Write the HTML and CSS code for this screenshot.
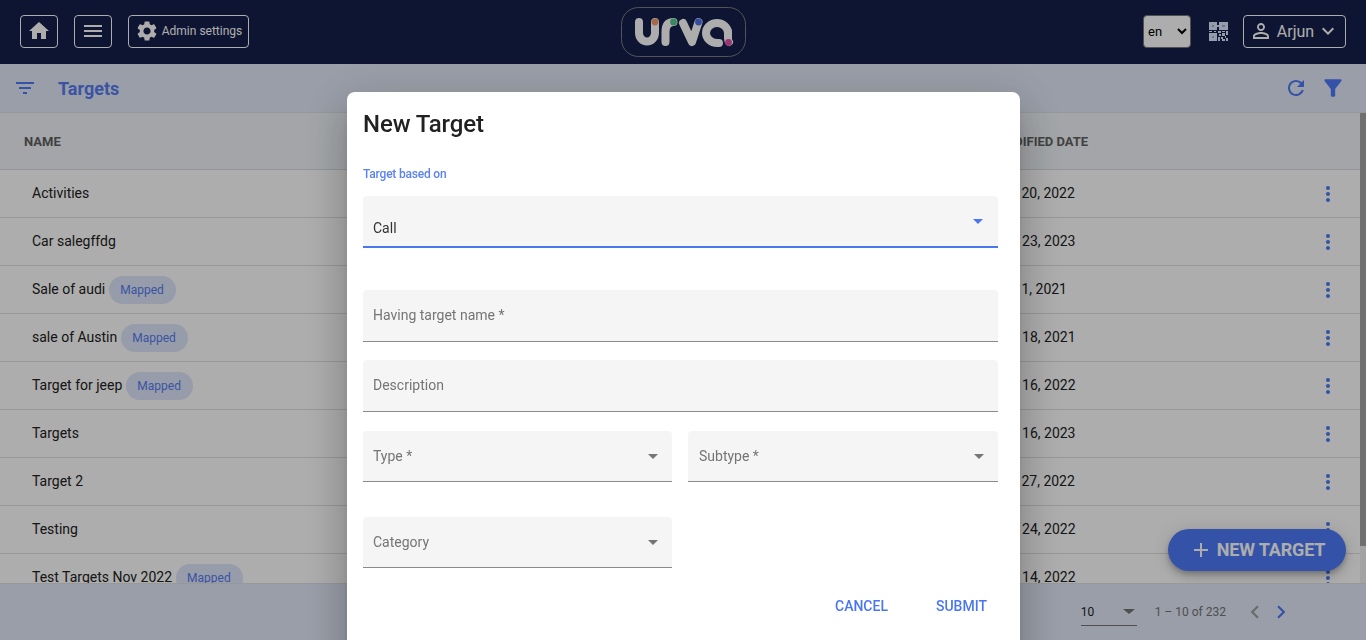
FILE: index.html
```html
<!DOCTYPE html>
<html>

<head>
  <meta charset="utf-8" />
  <title>Targets</title>
  <link rel="stylesheet" href="styles.css">
</head>

<body>
  <div class="page">
    <header class="topbar">
      <div class="topbar-left">
        <button class="nav-btn"><svg class="icon" viewBox="0 0 24 24" width="24" height="24"><path d="M10 20v-6h4v6h5v-8h3L12 3 2 12h3v8z"/></svg></button>
        <button class="nav-btn"><svg class="icon" viewBox="0 0 24 24" width="24" height="24"><path d="M3 18h18v-2H3v2zm0-5h18v-2H3v2zm0-7v2h18V6H3z"/></svg></button>
        <button class="nav-btn admin-btn"><svg class="icon" viewBox="0 0 24 24" width="24" height="24"><path d="M19.14 12.94c.04-.3.06-.61.06-.94 0-.32-.02-.64-.07-.94l2.03-1.58c.18-.14.23-.41.12-.61l-1.92-3.32c-.12-.22-.37-.29-.59-.22l-2.39.96c-.5-.38-1.03-.7-1.62-.94l-.36-2.54c-.04-.24-.24-.41-.48-.41h-3.84c-.24 0-.43.17-.47.41l-.36 2.54c-.59.24-1.13.57-1.62.94l-2.39-.96c-.22-.08-.47 0-.59.22L2.74 8.87c-.12.21-.08.47.12.61l2.03 1.58c-.05.3-.09.63-.09.94s.02.64.07.94l-2.03 1.58c-.18.14-.23.41-.12.61l1.92 3.32c.12.22.37.29.59.22l2.39-.96c.5.38 1.03.7 1.62.94l.36 2.54c.05.24.24.41.48.41h3.84c.24 0 .44-.17.47-.41l.36-2.54c.59-.24 1.13-.56 1.62-.94l2.39.96c.22.08.47 0 .59-.22l1.92-3.32c.12-.22.07-.47-.12-.61l-2.01-1.58zM12 15.6c-1.98 0-3.6-1.62-3.6-3.6s1.62-3.6 3.6-3.6 3.6 1.62 3.6 3.6-1.62 3.6-3.6 3.6z"/></svg><span>Admin settings</span></button>
      </div>
      <svg class="logo" viewBox="0 0 125 50" width="125" height="50">
        <rect x="0.5" y="0.5" width="124" height="49" rx="17" class="logo-frame"/>
        <path class="logo-mark" d="M18 15V26a8 8.500 0 0 0 16 0V15M44.500 35V25Q44.500 15 52.500 15M62 16L71 35L77.500 15M107 26a11 10 0 1 0-11 10H98M107 24V31Q107 34 108 35"/>
        <circle cx="34" cy="15" r="3.400" fill="#f59a6a"/>
        <circle cx="52.500" cy="15" r="3.400" fill="#52c890"/>
        <circle cx="77.500" cy="15" r="3.400" fill="#4d70ee"/>
        <circle cx="107.500" cy="35.500" r="3.400" fill="#e04ea8"/>
      </svg>
      <div class="topbar-right">
        <select class="lang-select"><option>en</option></select>
        <svg class="qr" viewBox="0 0 19 19" width="19" height="19">
          <path d="M0 0h8v8H0zM10 0h9v8h-9zM0 11h8v8H0zM8 3h2v2H8zM0 9h3v1H0zM5 9h2v1H5zM9 9h3v2H9zM13 9h3v1h-3zM17 9h2v4h-2zM10 12h2v2h-2zM13 11h3v3h-3zM9 15h2v4H9zM12 15h2v2h-2zM13 17h3v2h-3zM16 14h1v2h-1zM17 16h2v3h-2z"/>
          <path class="qr-inner" d="M3 3h2v2H3zM13 3h3v2h-3zM3 14h2v2H3z"/>
        </svg>
        <button class="nav-btn user-btn">
          <svg class="icon" viewBox="0 0 24 24" width="24" height="24"><path d="M12 5.900c1.160 0 2.100.94 2.100 2.100s-.94 2.100-2.100 2.100S9.900 9.160 9.900 8s.94-2.100 2.100-2.100m0 9c2.970 0 6.100 1.460 6.100 2.100v1.100H5.900V17c0-.64 3.130-2.100 6.100-2.100M12 4C9.790 4 8 5.790 8 8s1.790 4 4 4 4-1.790 4-4-1.790-4-4-4zm0 9c-2.670 0-8 1.340-8 4v3h16v-3c0-2.660-5.330-4-8-4z"/></svg>
          <span class="user-name">Arjun</span>
          <svg class="icon" viewBox="0 0 24 24" width="24" height="24"><path d="M16.590 8.590L12 13.170 7.410 8.590 6 10l6 6 6-6z"/></svg>
        </button>
      </div>
    </header>

    <div class="toolbar">
      <svg class="blue-icon" viewBox="0 0 24 24" width="24" height="24"><path d="M10 18h4v-2h-4v2zM3 6v2h18V6H3zm3 7h12v-2H6v2z"/></svg>
      <h2 class="toolbar-title">Targets</h2>
      <div class="toolbar-actions">
        <svg class="blue-icon" viewBox="0 0 24 24" width="24" height="24"><path d="M17.650 6.350C16.200 4.900 14.210 4 12 4c-4.420 0-7.990 3.580-7.990 8s3.570 8 7.990 8c3.730 0 6.840-2.550 7.730-6h-2.080c-.82 2.330-3.040 4-5.650 4-3.310 0-6-2.690-6-6s2.690-6 6-6c1.660 0 3.140.69 4.220 1.780L13 11h7V4l-2.350 2.350z"/></svg>
        <svg class="blue-icon" viewBox="0 0 24 24" width="26" height="26"><path d="M4.250 5.610C6.270 8.200 10 13 10 13v6c0 .55.45 1 1 1h2c.55 0 1-.45 1-1v-6s3.720-4.800 5.740-7.390c.51-.66.04-1.610-.79-1.610H5.040c-.83 0-1.300.95-.79 1.610z"/></svg>
      </div>
    </div>

    <div class="table-wrap">
      <div class="table">
        <div class="row head">
          <div class="col-name">NAME</div>
          <div class="col-date">MODIFIED DATE</div>
          <div class="col-menu"></div>
        </div>
        <div class="row"><div class="col-name">Activities</div><div class="col-date">Dec 20, 2022</div><div class="col-menu"><svg class="blue-icon" viewBox="0 0 24 24" width="24" height="24"><path d="M12 8c1.100 0 2-.9 2-2s-.9-2-2-2-2 .9-2 2 .9 2 2 2zm0 2c-1.100 0-2 .9-2 2s.9 2 2 2 2-.9 2-2-.9-2-2-2zm0 6c-1.100 0-2 .9-2 2s.9 2 2 2 2-.9 2-2-.9-2-2-2z"/></svg></div></div>
        <div class="row"><div class="col-name">Car salegffdg</div><div class="col-date">Mar 23, 2023</div><div class="col-menu"><svg class="blue-icon" viewBox="0 0 24 24" width="24" height="24"><path d="M12 8c1.100 0 2-.9 2-2s-.9-2-2-2-2 .9-2 2 .9 2 2 2zm0 2c-1.100 0-2 .9-2 2s.9 2 2 2 2-.9 2-2-.9-2-2-2zm0 6c-1.100 0-2 .9-2 2s.9 2 2 2 2-.9 2-2-.9-2-2-2z"/></svg></div></div>
        <div class="row"><div class="col-name">Sale of audi<span class="chip">Mapped</span></div><div class="col-date">Dec 1, 2021</div><div class="col-menu"><svg class="blue-icon" viewBox="0 0 24 24" width="24" height="24"><path d="M12 8c1.100 0 2-.9 2-2s-.9-2-2-2-2 .9-2 2 .9 2 2 2zm0 2c-1.100 0-2 .9-2 2s.9 2 2 2 2-.9 2-2-.9-2-2-2zm0 6c-1.100 0-2 .9-2 2s.9 2 2 2 2-.9 2-2-.9-2-2-2z"/></svg></div></div>
        <div class="row"><div class="col-name">sale of Austin<span class="chip">Mapped</span></div><div class="col-date">Nov 18, 2021</div><div class="col-menu"><svg class="blue-icon" viewBox="0 0 24 24" width="24" height="24"><path d="M12 8c1.100 0 2-.9 2-2s-.9-2-2-2-2 .9-2 2 .9 2 2 2zm0 2c-1.100 0-2 .9-2 2s.9 2 2 2 2-.9 2-2-.9-2-2-2zm0 6c-1.100 0-2 .9-2 2s.9 2 2 2 2-.9 2-2-.9-2-2-2z"/></svg></div></div>
        <div class="row"><div class="col-name">Target for jeep<span class="chip">Mapped</span></div><div class="col-date">Nov 16, 2022</div><div class="col-menu"><svg class="blue-icon" viewBox="0 0 24 24" width="24" height="24"><path d="M12 8c1.100 0 2-.9 2-2s-.9-2-2-2-2 .9-2 2 .9 2 2 2zm0 2c-1.100 0-2 .9-2 2s.9 2 2 2 2-.9 2-2-.9-2-2-2zm0 6c-1.100 0-2 .9-2 2s.9 2 2 2 2-.9 2-2-.9-2-2-2z"/></svg></div></div>
        <div class="row"><div class="col-name">Targets</div><div class="col-date">Mar 16, 2023</div><div class="col-menu"><svg class="blue-icon" viewBox="0 0 24 24" width="24" height="24"><path d="M12 8c1.100 0 2-.9 2-2s-.9-2-2-2-2 .9-2 2 .9 2 2 2zm0 2c-1.100 0-2 .9-2 2s.9 2 2 2 2-.9 2-2-.9-2-2-2zm0 6c-1.100 0-2 .9-2 2s.9 2 2 2 2-.9 2-2-.9-2-2-2z"/></svg></div></div>
        <div class="row"><div class="col-name">Target 2</div><div class="col-date">Dec 27, 2022</div><div class="col-menu"><svg class="blue-icon" viewBox="0 0 24 24" width="24" height="24"><path d="M12 8c1.100 0 2-.9 2-2s-.9-2-2-2-2 .9-2 2 .9 2 2 2zm0 2c-1.100 0-2 .9-2 2s.9 2 2 2 2-.9 2-2-.9-2-2-2zm0 6c-1.100 0-2 .9-2 2s.9 2 2 2 2-.9 2-2-.9-2-2-2z"/></svg></div></div>
        <div class="row"><div class="col-name">Testing</div><div class="col-date">Nov 24, 2022</div><div class="col-menu"><svg class="blue-icon" viewBox="0 0 24 24" width="24" height="24"><path d="M12 8c1.100 0 2-.9 2-2s-.9-2-2-2-2 .9-2 2 .9 2 2 2zm0 2c-1.100 0-2 .9-2 2s.9 2 2 2 2-.9 2-2-.9-2-2-2zm0 6c-1.100 0-2 .9-2 2s.9 2 2 2 2-.9 2-2-.9-2-2-2z"/></svg></div></div>
        <div class="row"><div class="col-name">Test Targets Nov 2022<span class="chip">Mapped</span></div><div class="col-date">Nov 14, 2022</div><div class="col-menu"><svg class="blue-icon" viewBox="0 0 24 24" width="24" height="24"><path d="M12 8c1.100 0 2-.9 2-2s-.9-2-2-2-2 .9-2 2 .9 2 2 2zm0 2c-1.100 0-2 .9-2 2s.9 2 2 2 2-.9 2-2-.9-2-2-2zm0 6c-1.100 0-2 .9-2 2s.9 2 2 2 2-.9 2-2-.9-2-2-2z"/></svg></div></div>
      </div>
      <div class="scrollbar"><div class="scroll-thumb"></div></div>
      <button class="fab"><svg viewBox="0 0 24 24" width="24" height="24"><path d="M19 13h-6v6h-2v-6H5v-2h6V5h2v6h6v2z"/></svg>NEW TARGET</button>
    </div>

    <footer class="pager">
      <div class="pager-size"><span>10</span><i class="arrow pager-arrow"></i></div>
      <span class="pager-range">1 – 10 of 232</span>
      <svg class="pager-prev" viewBox="0 0 24 24" width="26" height="26"><path d="M15.410 7.410L14 6l-6 6 6 6 1.410-1.410L10.830 12z"/></svg>
      <svg class="blue-icon" viewBox="0 0 24 24" width="26" height="26"><path d="M10 6L8.590 7.410 13.170 12l-4.580 4.590L10 18l6-6z"/></svg>
    </footer>
  </div>

  <div class="overlay">
    <div class="dialog">
      <h1 class="dialog-title">New Target</h1>
      <div class="based-label">Target based on</div>
      <div class="field active"><span class="field-value">Call</span><i class="arrow arrow-blue"></i></div>
      <div class="field field-2"><span>Having target name *</span></div>
      <div class="field field-3"><span>Description</span></div>
      <div class="field-row">
        <div class="field"><span>Type *</span><i class="arrow"></i></div>
        <div class="field"><span>Subtype *</span><i class="arrow"></i></div>
      </div>
      <div class="field-row category-row">
        <div class="field"><span>Category</span><i class="arrow"></i></div>
        <div></div>
      </div>
      <div class="dialog-actions">
        <button class="text-btn">CANCEL</button>
        <button class="text-btn">SUBMIT</button>
      </div>
    </div>
  </div>
</body>

</html>
```

FILE: styles.css
```css
* {
  box-sizing: border-box;
}

html, body {
  height: 100%;
}

body {
  margin: 0;
  overflow: hidden;
  font-family: Roboto, "Liberation Sans", sans-serif;
  color: #212121;
  background: #fff;
}

button {
  font-family: inherit;
  cursor: pointer;
}

.page {
  height: 640px;
  display: flex;
  flex-direction: column;
}

/* top bar */
.topbar {
  flex: 0 0 64px;
  display: grid;
  grid-template-columns: 1fr auto 1fr;
  align-items: center;
  padding: 0 20px;
  background: #161f4b;
}

.topbar-left, .topbar-right {
  display: flex;
  align-items: center;
  margin-bottom: 2px;
}

.topbar-left {
  gap: 16px;
}

.topbar-right {
  justify-content: flex-end;
}

.nav-btn {
  height: 33px;
  width: 38px;
  display: flex;
  align-items: center;
  justify-content: center;
  padding: 0;
  color: #fff;
  background: transparent;
  border: 1px solid #fff;
  border-radius: 4px;
}

.icon {
  fill: currentColor;
  flex: none;
}

.admin-btn {
  width: 121px;
  gap: 3px;
  font-size: 12px;
}

.logo-frame {
  fill: none;
  stroke: #7c7c82;
}

.logo-mark {
  fill: none;
  stroke: #fff;
  stroke-width: 8;
  stroke-linecap: round;
  stroke-linejoin: round;
}

.lang-select {
  width: 48px;
  height: 33px;
  font-family: inherit;
  font-size: 13px;
  background: #fff;
  border: 1px solid #767676;
  border-radius: 4px;
}

.qr {
  margin: 0 15px 0 18px;
  fill: #dce8ff;
}

.qr-inner {
  fill: #9fb0d0;
}

.user-btn {
  width: 103px;
  gap: 4px;
  font-size: 16px;
}

.user-name {
  margin-right: -2px;
}

/* page toolbar */
.toolbar {
  flex: 0 0 49px;
  display: flex;
  align-items: center;
  padding: 0 20px 0 13px;
  background: #e3e9f8;
  border-bottom: 1px solid #dde0e4;
}

.blue-icon {
  fill: #4d79f6;
  flex: none;
}

.toolbar-title {
  margin: 0 0 0 21px;
  font-size: 18px;
  font-weight: 700;
  color: #567cf0;
}

.toolbar-actions {
  margin-left: auto;
  display: flex;
  align-items: center;
  gap: 12px;
}

/* table */
.table-wrap {
  flex: 1;
  min-height: 0;
  display: flex;
  position: relative;
  overflow: hidden;
}

.table {
  flex: 1;
  min-width: 0;
}

.row {
  height: 48px;
  display: flex;
  align-items: center;
  padding-bottom: 2px;
  font-size: 14px;
  border-bottom: 1px solid #e0e0e0;
}

.row.head {
  height: 57px;
  padding-bottom: 0;
  font-size: 13px;
  font-weight: 700;
  color: #616161;
  background: #f0f4f8;
  border-bottom-color: #d8dade;
}

.col-name {
  flex: 1;
  padding-left: 32px;
  display: flex;
  align-items: center;
}

.head .col-name {
  padding-left: 24px;
}

.col-date {
  width: 286px;
}

.col-menu {
  width: 80px;
  padding: 2px 0 0 36px;
  display: flex;
}

.chip {
  height: 28px;
  margin: 2px 0 0 4px;
  padding: 0 12px 0 11px;
  display: flex;
  align-items: center;
  font-size: 12px;
  color: #567cf0;
  background: #dfe6fb;
  border-radius: 14px;
}

.scrollbar {
  flex: 0 0 6px;
  background: #f1f1f1;
}

.scroll-thumb {
  height: 433px;
  background: #a6a6a6;
}

.fab {
  position: absolute;
  top: 416px;
  right: 20px;
  width: 178px;
  height: 42px;
  display: flex;
  align-items: center;
  justify-content: center;
  gap: 4px;
  padding: 0 0 2px;
  font-size: 18px;
  font-weight: 700;
  letter-spacing: -.15px;
  color: #fff;
  background: #4d79f6;
  border: 0;
  border-radius: 21px;
  box-shadow: 0 3px 5px -1px rgba(0,0,0,.2), 0 6px 10px 0 rgba(0,0,0,.14), 0 1px 18px 0 rgba(0,0,0,.12);
}

.fab svg {
  fill: #fff;
  margin-top: 2px;
}

/* footer paginator */
.pager {
  flex: 0 0 57px;
  display: flex;
  align-items: center;
  padding-right: 72px;
  justify-content: flex-end;
  font-size: 12px;
  color: #757575;
  background: #e3e9f8;
  border-top: 1px solid #dde0e4;
  position: relative;
}

.pager-size {
  width: 56px;
  height: 28px;
  display: flex;
  align-items: center;
  justify-content: space-between;
  padding-right: 2px;
  color: #212121;
  border-bottom: 1px solid #757575;
  margin-right: 18px;
}

.pager-range {
  margin-right: 16px;
}

.pager-prev {
  fill: #9e9e9e;
}

.arrow {
  width: 0;
  height: 0;
  border-left: 5px solid transparent;
  border-right: 5px solid transparent;
  border-top: 5px solid #757575;
}

.pager-arrow {
  border-left-width: 6px;
  border-right-width: 6px;
}

.arrow-blue {
  border-top-color: #4a76f0;
}

/* modal */
.overlay {
  position: fixed;
  inset: 0;
  display: flex;
  justify-content: center;
  background: rgba(0,0,0,.32);
  padding: 92px 0 0 1px;
  overflow: hidden;
}

.dialog {
  width: 673px;
  height: 600px;
  padding: 0 22px 0 16px;
  background: #fff;
  border-radius: 8px;
  box-shadow: 0 11px 15px -7px rgba(0,0,0,.2), 0 24px 38px 3px rgba(0,0,0,.14), 0 9px 46px 8px rgba(0,0,0,.12);
}

.dialog-title {
  margin: 0;
  padding-top: 16px;
  height: 73px;
  font-size: 24px;
  line-height: 32px;
  font-weight: 500;
  letter-spacing: -.1px;
  color: #212121;
}

.based-label {
  height: 31px;
  line-height: 18px;
  font-size: 12px;
  font-weight: 500;
  letter-spacing: -.2px;
  color: #5b82f5;
}

.field {
  height: 52px;
  padding: 0 10px;
  display: flex;
  align-items: center;
  justify-content: space-between;
  font-size: 14px;
  color: #757575;
  background: #f5f5f5;
  border-bottom: 1px solid #8a8a8a;
  border-radius: 4px 4px 0 0;
}

.field.active {
  align-items: flex-end;
  padding-bottom: 10px;
  border-bottom: 2px solid #4a76f0;
  color: #333;
}

.field.active .arrow {
  margin: 0 5px 12px 0;
}

.field .arrow {
  margin-right: 4px;
}

.field-2 {
  margin-top: 42px;
  padding-bottom: 2px;
}

.field-3 {
  margin-top: 18px;
  padding-bottom: 2px;
}

.field-row {
  display: grid;
  grid-template-columns: 309px 311px;
  column-gap: 15px;
  margin-top: 19px;
}

.field-row .field {
  height: 51px;
}

.field-row .field + .field {
  margin-left: 1px;
  padding-left: 11px;
}

.category-row {
  margin-top: 35px;
}

.dialog-actions {
  margin-top: 22px;
  display: flex;
  justify-content: flex-end;
}

.text-btn {
  height: 32px;
  padding: 0 11px;
  margin-left: 26px;
  background: transparent;
  border: 0;
  font-size: 14px;
  font-weight: 500;
  color: #4a76f0;
}
```
